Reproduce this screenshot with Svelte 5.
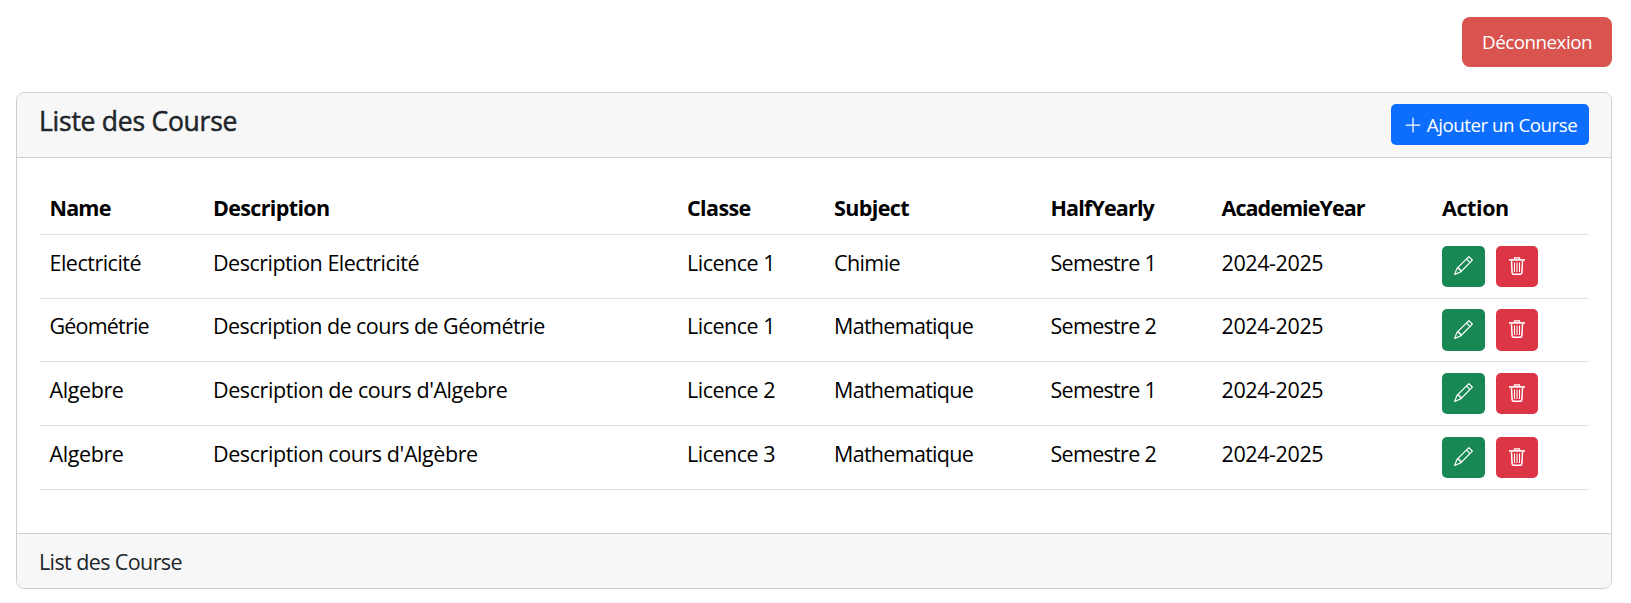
<script>
  const columns = [
    ['Name', -0.8], ['Description', -0.65], ['Classe', -0.6], ['Subject', -0.6],
    ['HalfYearly', -0.85], ['AcademieYear', -0.95], ['Action', -0.4]
  ];
  const courses = [
    [['Electricité', -0.5], ['Description Electricité', -0.5], ['Licence 1', -0.5], ['Chimie', -0.6], ['Semestre 1', -0.7], ['2024-2025', -0.4]],
    [['Géométrie', -0.8], ['Description de cours de Géométrie', -0.54], ['Licence 1', -0.5], ['Mathematique', -0.7], ['Semestre 2', -0.7], ['2024-2025', -0.4]],
    [['Algebre', -0.4], ["Description de cours d'Algebre", -0.42], ['Licence 2', -0.5], ['Mathematique', -0.7], ['Semestre 1', -0.7], ['2024-2025', -0.4]],
    [['Algebre', -0.4], ["Description cours d'Algèbre", -0.42], ['Licence 3', -0.5], ['Mathematique', -0.7], ['Semestre 2', -0.7], ['2024-2025', -0.4]]
  ];
</script>

<div class="page">
  <div class="topbar"><button class="logout"><span>Déconnexion</span></button></div>
  <section class="card">
    <header>
      <h5>Liste des Course</h5>
      <button class="add">
        <svg width="20" height="20" viewBox="0 0 16 16" fill="currentColor"><path d="M8 2a.5.5 0 0 1 .5.5v5h5a.5.5 0 0 1 0 1h-5v5a.5.5 0 0 1-1 0v-5h-5a.5.5 0 0 1 0-1h5v-5A.5.5 0 0 1 8 2"/></svg>
        <span>Ajouter un Course</span>
      </button>
    </header>
    <div class="body">
      <div class="table">
        <div class="row head">
          {#each columns as [label, tracking]}<div class="cell"><span style="letter-spacing: {tracking}px">{label}</span></div>{/each}
        </div>
        {#each courses as course, i}
          <div class="row" class:tight={i === 1}>
            {#each course as [value, tracking]}<div class="cell"><span style="letter-spacing: {tracking}px">{value}</span></div>{/each}
            <div class="cell actions">
              <button class="edit" aria-label="Modifier">
                <svg width="19" height="19" viewBox="0 0 16 16" fill="currentColor"><path d="M12.146.146a.5.5 0 0 1 .708 0l3 3a.5.5 0 0 1 0 .708l-10 10a.5.5 0 0 1-.168.11l-5 2a.5.5 0 0 1-.65-.65l2-5a.5.5 0 0 1 .11-.168zM11.207 2.5 13.5 4.793 14.793 3.5 12.5 1.207zm1.586 3L10.5 3.207 4 9.707V10h.5a.5.5 0 0 1 .5.5v.5h.5a.5.5 0 0 1 .5.5v.5h.293zm-9.761 5.175-.106.106-1.528 3.821 3.821-1.528.106-.106A.5.5 0 0 1 5 12.5V12h-.5a.5.5 0 0 1-.5-.5V11h-.5a.5.5 0 0 1-.468-.325"/></svg>
              </button>
              <button class="delete" aria-label="Supprimer">
                <svg width="18" height="18" viewBox="0 0 18 18">
                  <path d="M6.5 2V.8h5V2" fill="none" stroke="#fff" stroke-width="1.3"/>
                  <path d="M1 2h16v2H1z" fill="#fff" fill-opacity=".72"/>
                  <path d="M1 2h16v.7H1z" fill="#fff"/>
                  <path d="M3.5 4l.6 11.6q.1 1.700 1.600 1.700h6.600q1.500 0 1.600-1.700L14.500 4" fill="none" stroke="#fff" stroke-width="1.500"/>
                  <path d="M6.500 5.500v9.500M9 5.500v9.500M11.500 5.500v9.500" stroke="#fff" stroke-width="1.050"/>
                </svg>
              </button>
            </div>
          </div>
        {/each}
      </div>
    </div>
    <footer><span>List des Course</span></footer>
  </section>
</div>

<style>
  :global(body) { background: #fff; }
  .page {
    padding: 17px 19px 0 16px;
    font: 400 21.5px/33px "Open Sans", "Noto Sans", sans-serif;
    letter-spacing: -0.6px;
    color: #212529;
    box-sizing: border-box;
    white-space: nowrap;
  }
  .topbar { display: flex; justify-content: flex-end; }
  button {
    display: flex; align-items: center; justify-content: center;
    border: 0; padding: 0; margin: 0;
    font: inherit; font-size: 18.8px; color: #fff; letter-spacing: -0.5px;
    border-radius: 5px;
  }
  .logout { width: 150px; height: 50px; background: #d9534f; border-radius: 8px; }
  .card { margin-top: 25px; border: 1px solid #cfcfcf; border-radius: 8px; overflow: hidden; }
  header {
    height: 64px; padding: 11px 22px; box-sizing: border-box;
    display: flex; justify-content: space-between; align-items: flex-start;
    background: #f7f7f7;
  }
  h5 {
    margin: 0; padding-top: 1px; font-size: 26.5px; line-height: 33px; font-weight: 400;
    letter-spacing: -0.25px; -webkit-text-stroke: 0.5px currentColor;
  }
  .add { width: 198px; height: 41px; gap: 4px; background: #0d6efd; }
  .add span { padding-top: 2px; }
  .body { border-top: 1px solid #cfcfcf; padding: 22px 22px 43px; }
  .row {
    display: grid; grid-template-columns: 163.5px 474px 147px 216.5px 171px 220.5px 1fr;
    height: 64px; box-sizing: border-box; border-bottom: 1px solid #dee2e6; color: #000;
  }
  .head { height: 55px; font-weight: 700; }
  .cell { padding: 11px 0 0 10.5px; }
  .tight { height: 63px; }
  .tight .cell { padding-top: 10px; }
  .actions { display: flex; gap: 11px; padding-left: 10.5px; }
  .edit { width: 43px; height: 41px; background: #198754; }
  .delete { width: 42px; height: 41px; background: #dc3545; }
  .edit svg, .delete svg { margin-bottom: 2px; }
  .tight .edit, .tight .delete { height: 42px; }
  footer { height: 55px; padding: 11px 22px; box-sizing: border-box; border-top: 1px solid #cfcfcf; background: #f7f7f7; }
</style>
